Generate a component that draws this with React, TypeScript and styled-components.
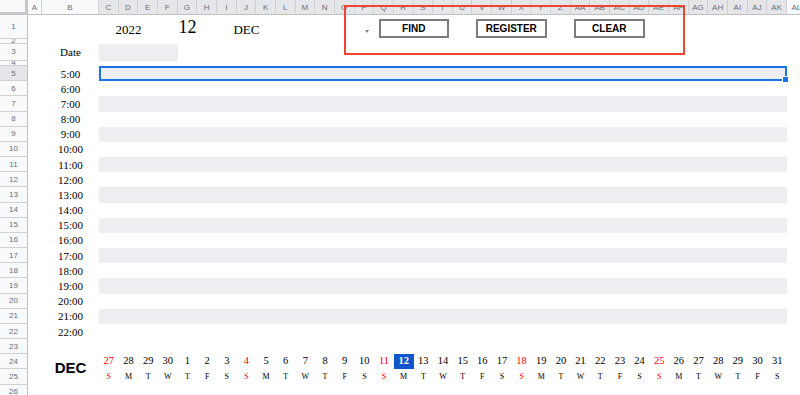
import React from 'react';
import styled, { createGlobalStyle } from 'styled-components';

const COL_W = 19.67;

const GlobalStyle = createGlobalStyle`
  html, body {
    margin: 0;
    padding: 0;
    background: #ffffff;
    overflow: hidden;
  }
`;

type Place = { $col: string | number; $row: string | number };

const Sheet = styled.div`
  position: relative;
  display: grid;
  grid-template-columns: 28px 14px 57px repeat(36, ${COL_W}px);
  grid-template-rows: 15px 23.5px 5px 17px 5.5px repeat(22, 15.18px);
  width: 800px;
  height: 395px;
  overflow: hidden;
  background: #ffffff;
`;

const Cell = styled.div<Place>`
  grid-column: ${p => p.$col};
  grid-row: ${p => p.$row};
  display: flex;
  align-items: center;
  justify-content: center;
  min-width: 0;
  min-height: 0;
  overflow: hidden;
  white-space: nowrap;
`;

const Corner = styled.div`
  grid-column: 1;
  grid-row: 1;
  background: #f8f9fa;
  border-right: 3px solid #c4c7c5;
  border-bottom: 3px solid #c4c7c5;
  box-sizing: border-box;
`;

const ColHead = styled(Cell)<{ $active: boolean }>`
  background: ${p => (p.$active ? '#e4e6e9' : '#f8f9fa')};
  border-right: 1px solid #cfd1d3;
  border-bottom: 1px solid #c0c0c0;
  box-sizing: border-box;
  font-family: 'Liberation Sans', Arial, sans-serif;
  font-size: 8px;
  color: #6b6e72;
`;

const RowHead = styled(Cell)<{ $active: boolean }>`
  background: ${p => (p.$active ? '#e4e6e9' : '#f8f9fa')};
  border-right: 1px solid #c0c0c0;
  border-bottom: 1px solid #cfd1d3;
  box-sizing: border-box;
  font-family: 'Liberation Sans', Arial, sans-serif;
  font-size: 8px;
  color: #6b6e72;
`;

const Stripe = styled(Cell)`
  background: #eceef1;
`;

const Selection = styled(Cell)`
  position: relative;
  overflow: visible;
  border: 2px solid #1a73e8;
  box-sizing: border-box;
  z-index: 2;

  &::after {
    content: '';
    position: absolute;
    right: -4px;
    bottom: -4px;
    width: 5px;
    height: 5px;
    background: #1a73e8;
    border: 1px solid #ffffff;
  }
`;

const HeadText = styled(Cell)<{ $size: number }>`
  align-items: flex-end;
  padding-bottom: 3px;
  box-sizing: border-box;
  font-family: 'Liberation Serif', 'Times New Roman', serif;
  font-size: ${p => p.$size}px;
  line-height: 1;
  color: #000000;
`;

const SerifLabel = styled(Cell)`
  font-family: 'Liberation Serif', 'Times New Roman', serif;
  font-size: 11px;
  color: #000000;
`;

const Toolbar = styled(Cell)`
  justify-content: flex-start;
  align-items: flex-start;
  gap: 27px;
  padding: 4px 0 0 4.6px;
  box-sizing: border-box;
  overflow: visible;
  z-index: 3;
`;

const ActionButton = styled.div<{ $w: number }>`
  width: ${p => p.$w}px;
  height: 19px;
  box-sizing: border-box;
  border: 2px solid #7d7d7d;
  background: #ffffff;
  display: flex;
  align-items: center;
  justify-content: center;
  font-family: 'Liberation Sans', Arial, sans-serif;
  font-weight: 700;
  font-size: 10px;
  color: #000000;
  flex-shrink: 0;
`;

const DropCell = styled(Cell)`
  justify-content: flex-end;
  align-items: flex-end;
  padding: 0 5px 6px 0;
  box-sizing: border-box;
`;

const DropArrow = styled.div`
  width: 0;
  height: 0;
  border-left: 2.5px solid transparent;
  border-right: 2.5px solid transparent;
  border-top: 3px solid #7a7a7a;
`;

const Annotation = styled.div`
  position: absolute;
  left: 344px;
  top: 5px;
  width: 341px;
  height: 50px;
  box-sizing: border-box;
  border: 2px solid #ee4430;
  pointer-events: none;
  z-index: 4;
`;

const CalMonth = styled(Cell)`
  font-family: 'Liberation Sans', Arial, sans-serif;
  font-weight: 700;
  font-size: 15px;
  color: #000000;
  padding-bottom: 4px;
  box-sizing: border-box;
`;

const DayNum = styled(Cell)<{ $red: boolean; $today: boolean }>`
  font-family: 'Liberation Serif', 'Times New Roman', serif;
  font-size: 10.5px;
  font-weight: ${p => (p.$today ? 700 : 400)};
  color: ${p => (p.$today ? '#ffffff' : p.$red ? '#ff0000' : '#000000')};
  background: ${p => (p.$today ? '#1155cc' : 'transparent')};
  padding-bottom: 2px;
  box-sizing: border-box;
`;

const Weekday = styled(Cell)<{ $red: boolean }>`
  font-family: 'Liberation Serif', 'Times New Roman', serif;
  font-size: 8px;
  color: ${p => (p.$red ? '#ff0000' : '#000000')};
  padding-bottom: 2px;
  box-sizing: border-box;
`;

const colName = (i: number) =>
  i < 26 ? String.fromCharCode(65 + i) : 'A' + String.fromCharCode(65 + i - 26);

// grid column of spreadsheet column i (A = 0)
const gc = (i: number) => i + 2;

const COLUMNS = Array.from({ length: 38 }, (_, i) => colName(i));
const ROWS = Array.from({ length: 26 }, (_, i) => i + 1);
const HOURS = Array.from({ length: 18 }, (_, i) => i + 5);
const DAYS = [27, 28, 29, 30, ...Array.from({ length: 31 }, (_, i) => i + 1)];
const LETTERS = 'SMTWTFS';

const App: React.FC = () => {
  return (
    <>
      <GlobalStyle />
      <Sheet>
        <Corner />
        {COLUMNS.map((name, i) => (
          <ColHead key={name} $col={gc(i)} $row={1} $active={i >= 2 && i <= 36}>
            {name}
          </ColHead>
        ))}
        {ROWS.map(r => (
          <RowHead key={r} $col={1} $row={r + 1} $active={r === 5}>
            {r}
          </RowHead>
        ))}

        {[5, 7, 9, 11, 13, 15, 17, 19, 21].map(r => (
          <Stripe key={r} $col="4 / 39" $row={r + 1} />
        ))}
        <Stripe $col="4 / 8" $row={4} />

        <HeadText $col="4 / 7" $row={2} $size={13}>2022</HeadText>
        <HeadText $col="7 / 10" $row={2} $size={18}>12</HeadText>
        <HeadText $col="10 / 13" $row={2} $size={13}>DEC</HeadText>

        <DropCell $col={gc(15)} $row={2}>
          <DropArrow />
        </DropCell>
        <Toolbar $col={`${gc(16)} / ${gc(33)}`} $row={2}>
          <ActionButton $w={70}>FIND</ActionButton>
          <ActionButton $w={71}>REGISTER</ActionButton>
          <ActionButton $w={71}>CLEAR</ActionButton>
        </Toolbar>

        <SerifLabel $col={3} $row={4}>Date</SerifLabel>
        {HOURS.map((h, i) => (
          <SerifLabel key={h} $col={3} $row={i + 6}>{h}:00</SerifLabel>
        ))}

        <Selection $col="4 / 39" $row={6} />

        <CalMonth $col={3} $row="25 / 27">DEC</CalMonth>
        {DAYS.map((d, i) => (
          <DayNum
            key={`d${i}`}
            $col={gc(i + 2)}
            $row={25}
            $red={i % 7 === 0}
            $today={i === 15}
          >
            {d}
          </DayNum>
        ))}
        {DAYS.map((_, i) => (
          <Weekday key={`w${i}`} $col={gc(i + 2)} $row={26} $red={i % 7 === 0}>
            {LETTERS[i % 7]}
          </Weekday>
        ))}

        <Annotation />
      </Sheet>
    </>
  );
};

export default App;
